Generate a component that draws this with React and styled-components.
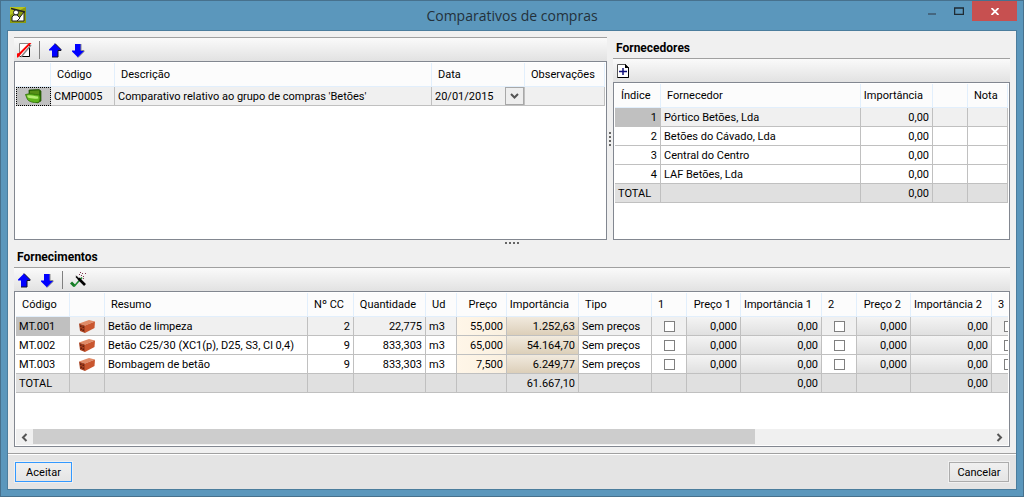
import React from "react";
import styled, { createGlobalStyle, css } from "styled-components";

const GlobalStyle = createGlobalStyle`
  *, *::before, *::after { box-sizing: border-box; }
  body { margin: 0; }
  body, button, select, input {
    font-family: Roboto, "Liberation Sans", sans-serif;
    font-size: 11px;
    color: #000;
  }
`;

const Frame = styled.div`
  display: flex;
  flex-direction: column;
  min-height: 100vh;
  padding: 0 6px 6px;
  background: #5b97bc;
  border: 1px solid #47718d;
`;

const TitleBar = styled.header`
  display: grid;
  grid-template-columns: 100px 1fr 100px;
  height: 29px;
  flex: none;
`;

const AppIcon = styled.svg`
  width: 16px;
  height: 16px;
  margin: 6px 3px;
`;

const Title = styled.h1`
  margin: 0;
  font: 400 14px/29px "Open Sans", "Noto Sans", sans-serif;
  text-align: center;
  color: #23313b;
`;

const WindowButtons = styled.div`
  display: flex;
  justify-content: flex-end;
  align-items: flex-start;
`;

const WindowButton = styled.button`
  display: grid;
  place-items: center;
  width: ${(p) => (p.$close ? 45 : 27)}px;
  height: 20px;
  padding: 0;
  border: 0;
  background: ${(p) => (p.$close ? "#c75050" : "transparent")};
`;

const Client = styled.main`
  display: flex;
  flex-direction: column;
  flex: 1;
  border: 1px solid #4b7d9d;
  background: #f0f0f0;
`;

const Work = styled.div`
  display: flex;
  flex-direction: column;
  flex: 1;
  padding: 6px;
`;

const TopRow = styled.div`
  display: flex;
  min-height: 203px;
`;

const Pane = styled.section`
  display: flex;
  flex-direction: column;
  flex: ${(p) => p.$grow || 1} 1 0;
  min-width: 0;
`;

const PaneTitle = styled.h2`
  margin: 0;
  padding-left: 3px;
  height: 21px;
  font-size: 12px;
  line-height: 23px;
  font-weight: 700;
`;

const Toolbar = styled.div`
  display: flex;
  align-items: center;
  gap: 7px;
  height: 24px;
  flex: none;
  padding: 1px 2px 0;
  border-top: 1px solid #a0a0a0;
  background: linear-gradient(#fafafa, #e2e2e2);
`;

const ToolButton = styled.button`
  display: grid;
  place-items: center;
  width: 16px;
  height: 18px;
  padding: 0;
  border: 0;
  background: none;
`;

const Divider = styled.span`
  width: 1px;
  height: 18px;
  background: #808080;
`;

const GridBox = styled.div`
  display: flex;
  flex-direction: column;
  flex: 1;
  min-height: 0;
  padding: 1px;
  border: 1px solid #828790;
  background: #fff;
`;

const Viewport = styled.div`
  flex: 1;
  overflow: hidden;
`;

const Table = styled.table`
  table-layout: fixed;
  width: ${(p) => (p.$width ? p.$width + "px" : "100%")};
  border-spacing: 0;
  white-space: nowrap;
`;

const Th = styled.th`
  height: 24px;
  padding: ${(p) => (p.$right ? "0 9px 0 0" : "0 0 0 6px")};
  border-right: 1px solid #e2effc;
  border-bottom: 1px solid #e2effc;
  background: #fcfcfc;
  font-weight: 400;
  text-align: ${(p) => (p.$right ? "right" : "left")};
`;

const tints = {
  price: "linear-gradient(to right, #fff6e8, #faf0e0)",
  amount: "linear-gradient(#f1eade, #dccfb9)",
  quote: "linear-gradient(#f4f4f4, #e0e0e0)",
};

const Td = styled.td`
  height: 19px;
  padding: 1px 3px 0;
  line-height: 17px;
  overflow: hidden;
  border-right: 1px solid #c0c0c0;
  border-bottom: 1px solid #c0c0c0;
  text-align: ${(p) => (p.$center ? "center" : p.$right ? "right" : "left")};
  ${(p) => p.$tint && css`background: ${tints[p.$tint]};`}
  ${(p) => p.$current && css`background: #c0c0c0;`}
  ${(p) => p.$focus && css`background: #c0c0c0; outline: 1px dotted #000; outline-offset: -1px;`}
  ${(p) => p.$flush && css`padding: 0;`}

  svg, input { display: block; margin: 0 auto; }
`;

const Tr = styled.tr`
  background: ${(p) => (p.$total ? "#e0e0e0" : p.$active ? "#f0f0f0" : "#fff")};
`;

const Check = styled.input`
  appearance: none;
  width: 11px;
  height: 11px;
  border: 1px solid #808080;
  background: #fff;
`;

const DateField = styled.div`
  display: grid;
  grid-template-columns: 1fr 19px;
  height: 18px;
`;

const DateSelect = styled.select`
  grid-area: 1 / 1 / 2 / 3;
  appearance: none;
  padding: 1px 0 0 3px;
  border: 0;
  background: none;
`;

const DateArrow = styled.span`
  grid-area: 1 / 2;
  display: grid;
  place-items: center;
  border: 1px solid #a8a8a8;
  background: #eee;
  pointer-events: none;
`;

const Splitter = styled.div`
  display: flex;
  flex-direction: ${(p) => (p.$vertical ? "column" : "row")};
  justify-content: center;
  align-items: center;
  gap: 2px;
  flex: none;
  ${(p) => (p.$vertical ? "width: 6px;" : "height: 6px;")}
`;

const Dot = styled.i`
  width: 2px;
  height: 2px;
  background: #666;
`;

const ScrollBar = styled.div`
  display: flex;
  height: 16px;
  flex: none;
  background: #f0f0f0;
`;

const ScrollButton = styled.button`
  display: grid;
  place-items: center;
  width: 17px;
  padding: 0;
  border: 0;
  background: none;
`;

const Track = styled.div`
  flex: 1;
`;

const Thumb = styled.div`
  width: 75.4%;
  height: 15px;
  background: #cdcdcd;
`;

const Footer = styled.footer`
  display: flex;
  justify-content: space-between;
  align-items: center;
  height: 36px;
  padding: 1px 7px 0;
  border-top: 1px solid #a0a0a0;
  box-shadow: inset 0 1px #fff;
  background: #e4e4e4;
`;

const DialogButton = styled.button`
  height: 20px;
  padding: 0;
  width: ${(p) => (p.$primary ? 57 : 60)}px;
  border: 1px solid ${(p) => (p.$primary ? "#3399ff" : "#acacac")};
  background: linear-gradient(#f0f0f0, #e5e5e5);
  box-shadow: 0 0 0 1px #f0f0f0;
`;

const ArrowIcon = ({ down }) => (
  <svg width="14" height="15" viewBox="0 0 14 15">
    <g transform={down ? "rotate(180 7 7.5)" : undefined}>
      <path d="M7 .5 1 6.500v1h3V14h6V7.500h3v-1Z" fill="#00f" />
      <path
        d={down ? "M4 14V7.500H1v-1L7 .5" : "M7 .5l6 6v1h-3V14H4"}
        fill="none"
        stroke={down ? "#888" : "#112"}
      />
    </g>
  </svg>
);

const DeleteIcon = () => (
  <svg width="16" height="16" viewBox="0 0 16 16">
    <path d="M3.500 1.500h9l1 1v12h-10Z" fill="#fff" stroke="#888" />
    <path d="M13.500 3v11.500H4" fill="none" stroke="#000" />
    <path d="M5 15 15 3" stroke="#888" strokeWidth="1.500" />
    <path d="M1 15.500v-4l2-.5L13 1h2.500L6 11l-4 4.500Z" fill="#f00" />
  </svg>
);

const AddIcon = () => (
  <svg width="14" height="16" viewBox="0 0 14 16">
    <path d="M1.500 1.500h8l3 3v10h-11Z" fill="#fff" stroke="#555" />
    <path d="M9.500 1.500v3h3v10h-11" fill="none" stroke="#000" />
    <path d="M9 1l4 4H9Z" fill="#000" />
    <path d="M7 5v7M3 8.500h8" stroke="#10107a" strokeWidth="1.500" />
  </svg>
);

const WandIcon = () => (
  <svg width="16" height="17" viewBox="0 0 16 17">
    <path d="M1 10.500 4.500 14" stroke="#147a24" strokeWidth="3" />
    <path d="M4 14.500 12 5.500" stroke="#1c8a30" strokeWidth="1.600" />
    <path d="M6 3.500 15 12.500" stroke="#888" />
    <path d="M6 4.500 9 7.500" stroke="#000" strokeWidth="1.500" />
    <path d="M8.500 6.500 15 13" stroke="#000" strokeWidth="2.600" />
    <path d="M9 2.500h1M12 1.500h1M13 4.500h1M11 3.500h1M15 1.500h1M10 .5h1M13 6.500h1" stroke="#803850" />
  </svg>
);

const BrickIcon = () => (
  <svg width="18" height="15" viewBox="0 0 18 15">
    <path d="M1 4.500 11 1l6 1.500L7 6.500Z" fill="#e08a66" />
    <path d="M1 4.500l6 2V14l-5-2Z" fill="#a5401f" />
    <path d="M7 6.500 17 2.500 16.500 9 7 14Z" fill="#c9562f" />
    <path d="M2 6.500h1.500V8H2zM4.500 7.500H6V9H4.500zM2.500 9.500h1.500V11H2.500zM4.500 10.500H6V12H4.500z" fill="#651f10" />
  </svg>
);

const FolderIcon = () => (
  <svg width="17" height="15" viewBox="0 0 17 15">
    <path d="M4 1 14 .5 16 2v10l-4 2L4 6Z" fill="#2f6d08" stroke="#1d4a03" strokeWidth=".7" />
    <path d="M5 2l9-.5v5l-9-1Z" fill="#568f16" />
    <path d="M.5 5.500C5 4 9 5.500 14.500 6c1 3 .8 5-1 7.500C8 14 4 12.500 2.500 10.500Z" fill="#5fb51c" stroke="#2d6f06" strokeWidth=".8" />
    <path d="M2 6.500c4-1 7 .5 11 1l.3 2C9 10 5 9.500 2.800 8.500Z" fill="#b5ee72" />
  </svg>
);

const Chevron = ({ d, w = 9, h = 9 }) => (
  <svg width={w} height={h} viewBox={`0 0 ${w} ${h}`}>
    <path d={d} fill="none" stroke="#555" strokeWidth="2" />
  </svg>
);

const Dots = ({ vertical }) => (
  <Splitter $vertical={vertical}>
    <Dot /><Dot /><Dot /><Dot />
  </Splitter>
);

const Cols = ({ widths }) => (
  <colgroup>
    {widths.map((w, i) => <col key={i} style={w ? { width: w } : undefined} />)}
  </colgroup>
);

const suppliers = ["Pórtico Betões, Lda", "Betões do Cávado, Lda", "Central do Centro", "LAF Betões, Lda"];

const supplies = [
  ["MT.001", "Betão de limpeza", "2", "22,775", "55,000", "1.252,63"],
  ["MT.002", "Betão C25/30 (XC1(p), D25, S3, Cl 0,4)", "9", "833,303", "65,000", "54.164,70"],
  ["MT.003", "Bombagem de betão", "9", "833,303", "7,500", "6.249,77"],
];

const supplyWidths = [54, 35, 203, 46, 72, 31, 50, 72, 73, 35, 54, 81, 35, 54, 81, 35];
const supplyTotal = supplyWidths.reduce((a, b) => a + b, 0);

function Comparisons() {
  return (
    <Pane $grow={593}>
      <Toolbar>
        <ToolButton aria-label="Eliminar"><DeleteIcon /></ToolButton>
        <Divider />
        <ToolButton aria-label="Subir"><ArrowIcon /></ToolButton>
        <ToolButton aria-label="Descer"><ArrowIcon down /></ToolButton>
      </Toolbar>
      <GridBox>
        <Table>
          <Cols widths={[35, 64, 0, 93, 80]} />
          <thead>
            <tr>
              <Th /><Th>Código</Th><Th>Descrição</Th><Th>Data</Th><Th>Observações</Th>
            </tr>
          </thead>
          <tbody>
            <Tr $active>
              <Td $focus><FolderIcon /></Td>
              <Td>CMP0005</Td>
              <Td>Comparativo relativo ao grupo de compras 'Betões'</Td>
              <Td $flush>
                <DateField>
                  <DateSelect aria-label="Data"><option>20/01/2015</option></DateSelect>
                  <DateArrow><Chevron d="M1 2l3.500 3.500L8 2" h={8} /></DateArrow>
                </DateField>
              </Td>
              <Td />
            </Tr>
          </tbody>
        </Table>
      </GridBox>
    </Pane>
  );
}

function Suppliers() {
  return (
    <Pane $grow={397}>
      <PaneTitle>Fornecedores</PaneTitle>
      <Toolbar>
        <ToolButton aria-label="Adicionar"><AddIcon /></ToolButton>
      </Toolbar>
      <GridBox>
        <Table>
          <Cols widths={[46, 0, 72, 35, 40]} />
          <thead>
            <tr>
              <Th>Índice</Th><Th>Fornecedor</Th><Th $right>Importância</Th><Th /><Th>Nota</Th>
            </tr>
          </thead>
          <tbody>
            {suppliers.map((name, i) => (
              <Tr key={name} $active={i === 0}>
                <Td $right $current={i === 0}>{i + 1}</Td>
                <Td>{name}</Td>
                <Td $right>0,00</Td>
                <Td /><Td />
              </Tr>
            ))}
            <Tr $total>
              <Td>TOTAL</Td><Td /><Td $right>0,00</Td><Td /><Td />
            </Tr>
          </tbody>
        </Table>
      </GridBox>
    </Pane>
  );
}

const Quote = ({ code, n }) => (
  <>
    <Td $center><Check type="checkbox" aria-label={`${code} fornecedor ${n}`} /></Td>
    <Td $right $tint="quote">0,000</Td>
    <Td $right $tint="quote">0,00</Td>
  </>
);

function Supplies() {
  return (
    <Pane>
      <PaneTitle>Fornecimentos</PaneTitle>
      <Toolbar>
        <ToolButton aria-label="Subir"><ArrowIcon /></ToolButton>
        <ToolButton aria-label="Descer"><ArrowIcon down /></ToolButton>
        <Divider />
        <ToolButton aria-label="Assistente"><WandIcon /></ToolButton>
      </Toolbar>
      <GridBox>
        <Viewport>
          <Table $width={supplyTotal}>
            <Cols widths={supplyWidths} />
            <thead>
              <tr>
                <Th>Código</Th><Th /><Th>Resumo</Th><Th $right>Nº CC</Th><Th $right>Quantidade</Th>
                <Th>Ud</Th><Th $right>Preço</Th><Th $right>Importância</Th><Th>Tipo</Th>
                <Th>1</Th><Th $right>Preço 1</Th><Th $right>Importância 1</Th>
                <Th>2</Th><Th $right>Preço 2</Th><Th $right>Importância 2</Th>
                <Th>3</Th>
              </tr>
            </thead>
            <tbody>
              {supplies.map(([code, text, cc, qty, price, amount], i) => (
                <Tr key={code} $active={i === 0}>
                  <Td $current={i === 0}>{code}</Td>
                  <Td><BrickIcon /></Td>
                  <Td>{text}</Td>
                  <Td $right>{cc}</Td>
                  <Td $right>{qty}</Td>
                  <Td>m3</Td>
                  <Td $right $tint="price">{price}</Td>
                  <Td $right $tint="amount">{amount}</Td>
                  <Td>Sem preços</Td>
                  <Quote code={code} n={1} />
                  <Quote code={code} n={2} />
                  <Td $center><Check type="checkbox" aria-label={`${code} fornecedor 3`} /></Td>
                </Tr>
              ))}
              <Tr $total>
                <Td>TOTAL</Td><Td /><Td /><Td /><Td /><Td /><Td />
                <Td $right>61.667,10</Td>
                <Td /><Td /><Td /><Td $right>0,00</Td>
                <Td /><Td /><Td $right>0,00</Td><Td />
              </Tr>
            </tbody>
          </Table>
        </Viewport>
        <ScrollBar>
          <ScrollButton aria-label="Deslocar para a esquerda"><Chevron d="M6.500 1 3 4.500 6.500 8" /></ScrollButton>
          <Track><Thumb /></Track>
          <ScrollButton aria-label="Deslocar para a direita"><Chevron d="M2.500 1 6 4.500 2.500 8" /></ScrollButton>
        </ScrollBar>
      </GridBox>
    </Pane>
  );
}

export default function App() {
  return (
    <>
      <GlobalStyle />
      <Frame>
        <TitleBar>
          <AppIcon viewBox="0 0 16 16">
            <path d="M0 0h16v16H0z" fill="#8a9a10" />
            <path d="M0 0h16L0 8z" fill="#b8c420" />
            <path d="M1 1.500 15 5" stroke="#222" strokeWidth="1.500" />
            <path d="M14 5v9H7Z" fill="#fff" stroke="#222" />
            <circle cx="6" cy="5.500" r="2.500" fill="#fff" stroke="#222" />
            <path d="M2 14v-4l2-2h3l3 3-3 3Z" fill="#fff" stroke="#222" />
          </AppIcon>
          <Title>Comparativos de compras</Title>
          <WindowButtons>
            <WindowButton aria-label="Minimizar">
              <svg width="10" height="12"><path d="M1 8h8v2H1z" fill="#456780" /></svg>
            </WindowButton>
            <WindowButton aria-label="Maximizar">
              <svg width="10" height="8"><path d="M.5 1v6.500h9V1M0 1h10" fill="none" stroke="#1f2b33" strokeWidth="1.500" /></svg>
            </WindowButton>
            <WindowButton $close aria-label="Fechar">
              <svg width="8" height="7"><path d="M.5 0l7 7M7.500 0l-7 7" stroke="#fff" strokeWidth="1.800" /></svg>
            </WindowButton>
          </WindowButtons>
        </TitleBar>
        <Client>
          <Work>
            <TopRow>
              <Comparisons />
              <Dots vertical />
              <Suppliers />
            </TopRow>
            <Dots />
            <Supplies />
          </Work>
          <Footer>
            <DialogButton $primary>Aceitar</DialogButton>
            <DialogButton>Cancelar</DialogButton>
          </Footer>
        </Client>
      </Frame>
    </>
  );
}
